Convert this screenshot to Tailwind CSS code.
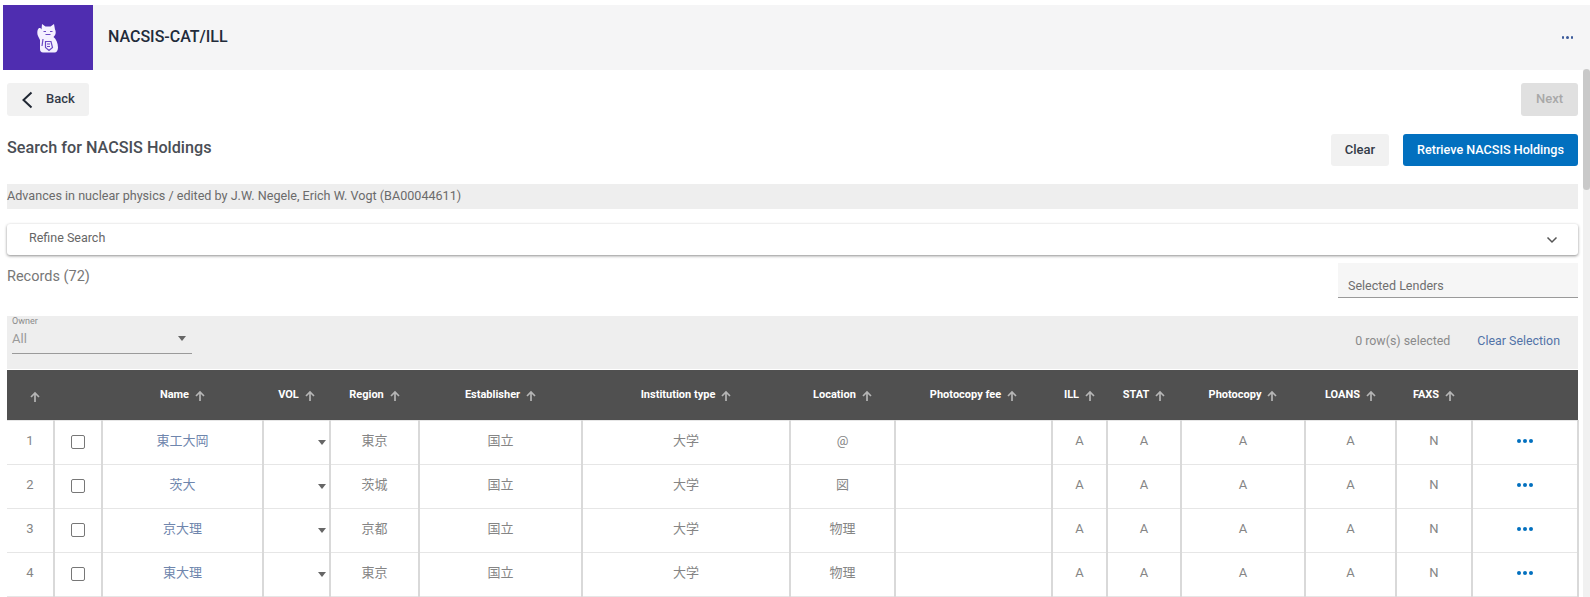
<!DOCTYPE html>
<html lang="en">
  <head>
    <meta charset="UTF-8" />
    <title>NACSIS-CAT/ILL</title>
    <script src="https://cdn.jsdelivr.net/npm/@tailwindcss/browser@4"></script>
  </head>
  <body class="h-[597px] overflow-hidden bg-white font-['Roboto','Noto_Sans_CJK_JP',sans-serif] text-[#666] antialiased">
    <!-- Top bar -->
    <header class="mt-[5px] ml-[3px] flex h-[65px] items-center bg-[#f5f5f6]">
      <div class="flex h-full w-[90px] items-center justify-center bg-[#4f2db0]">
        <svg width="22" height="30" viewBox="0 0 22 30" fill="#f4f0ff">
          <path d="M5 1l3.500 2.500h5L17 1l1 5.500c1.500 3 .5 6-1.500 7.500 2.500 2 4.500 6 4.500 10.500 0 3-1.500 5-3.500 5H6c-2 0-3-1.500-3-3.500v-9L1 13c-1-2-1-6 .5-7.500 1.500-1 2.500 0 3 1z" />
          <path d="M6.500 8.500h2.500M13 8.500h2.500M8.500 11.500h5M6 16l-1 7M8.500 18.500h5.500l1.500 6-3.500 3-3.500-3zM10 21h3M10 23.500h3" stroke="#6a48c4" stroke-width="1.200" fill="none" />
        </svg>
      </div>
      <h1 class="ml-[15px] pb-[2px] text-[16px] leading-none font-medium text-[#222b3a]">NACSIS-CAT/ILL</h1>
      <div class="mr-[17px] ml-auto flex gap-[2px]">
        <span class="size-[2.500px] rounded-full bg-[#3b5a9a]"></span>
        <span class="size-[2.500px] rounded-full bg-[#3b5a9a]"></span>
        <span class="size-[2.500px] rounded-full bg-[#3b5a9a]"></span>
      </div>
    </header>

    <!-- Scrollbar -->
    <div class="absolute top-[69px] right-0 bottom-0 w-[7px] bg-[#f1f1f1]">
      <div class="h-[121px] w-full rounded-sm bg-[#c9c9c9]"></div>
    </div>

    <main class="mr-[12px] ml-[7px]">
      <div class="mt-[13px] flex justify-between">
        <button class="flex h-[33px] w-[82px] items-center rounded-[3px] bg-[#f1f1f1] pl-[14px] text-[13px] font-medium text-[#333b48]">
          <svg width="12" height="18" viewBox="0 0 12 18" fill="none" stroke="#1f2733" stroke-width="2"><path d="M10.500 1.500L2.500 9l8 7.500" /></svg>
          <span class="ml-[13px] pb-[2px]">Back</span>
        </button>
        <button class="h-[33px] w-[57px] rounded-[3px] bg-[#e0e0e0] pb-[2px] text-[13px] font-medium text-[#a8a8a8]">Next</button>
      </div>

      <div class="mt-[18px] flex items-center justify-between">
        <h2 class="pb-[4px] text-[16.200px] font-medium text-[#4a4e55]">Search for NACSIS Holdings</h2>
        <div class="flex gap-[14px]">
          <button class="h-[32px] w-[58px] rounded-[3px] bg-[#f1f1f1] text-[13px] font-medium text-[#333b48]">Clear</button>
          <button class="h-[32px] w-[175px] rounded-[3px] bg-[#0270bf] text-[12.600px] font-medium text-white">Retrieve NACSIS Holdings</button>
        </div>
      </div>

      <div class="mt-[18px] flex h-[25px] items-center bg-[#eeeeee] text-[12.600px] text-[#6b6b6b]">Advances in nuclear physics / edited by J.W. Negele, Erich W. Vogt (BA00044611)</div>

      <div class="mt-[15px] flex h-[31px] items-center justify-between rounded-[3px] bg-white pr-[20px] pl-[22px] text-[12.500px] text-[#666] shadow-[0_1px_3px_rgba(0,0,0,0.45)]">
        <span class="-mt-[2px]">Refine Search</span>
        <svg width="12" height="8" viewBox="0 0 12 8" fill="none" stroke="#555" stroke-width="1.500"><path d="M1.500 1.500L6 6l4.500-4.500" /></svg>
      </div>

      <div class="mt-[8px] flex h-[53px] items-start justify-between">
        <span class="mt-[1px] text-[14.500px] leading-[26px] text-[#777]">Records (72)</span>
        <div class="flex h-[35px] w-[240px] items-end border-b border-[#9a9a9a] bg-[#f6f6f6] pb-[1px] pl-[10px] text-[12.500px] text-[#6f6f6f]">Selected Lenders</div>
      </div>

      <div class="flex h-[53px] items-start justify-between bg-[#eeeeee] pr-[18px] pl-[5px]">
        <div class="w-[180px]">
          <div class="text-[9px] leading-[11px] text-[#8a8a8a]">Owner</div>
          <div class="mt-[3px] flex h-[24px] items-center justify-between border-b border-[#9a9a9a] pr-[3px] pb-[6px] text-[13px] text-[#9a9a9a]">
            <span>All</span>
            <span class="mr-[3px] h-0 w-0 border-x-[4.500px] border-t-[5px] border-x-transparent border-t-[#666]"></span>
          </div>
        </div>
        <div class="mt-[17px] flex text-[12.400px] leading-[15px]">
          <span class="text-[#8a8a8a]">0 row(s) selected</span>
          <a class="ml-[27px] text-[#5273a8]">Clear Selection</a>
        </div>
      </div>

      <!-- Holdings table -->
      <table class="mt-[1px] w-[1571px] table-fixed border-collapse text-center text-[13px] text-[#858585]">
        <colgroup>
          <col class="w-[47px]" /><col class="w-[48px]" /><col class="w-[161px]" /><col class="w-[67px]" /><col class="w-[89px]" /><col class="w-[163px]" /><col class="w-[208px]" /><col class="w-[105px]" /><col class="w-[157px]" /><col class="w-[55px]" /><col class="w-[74px]" /><col class="w-[124px]" /><col class="w-[91px]" /><col class="w-[76px]" /><col class="w-[106px]" />
        </colgroup>
        <thead class="bg-[#505050] text-[11px] font-bold text-white">
          <tr class="h-[50px]">
            <th class="pt-[3px] pl-[9px]"><svg class="inline" width="10" height="11" viewBox="0 0 10 11" fill="none" stroke="#b5b5b5" stroke-width="1.700"><path d="M5 11V2M1 6l4-4 4 4" /></svg></th>
            <th></th>
            <th>Name<svg class="ml-[6px] inline align-[-3px]" width="10" height="11" viewBox="0 0 10 11" fill="none" stroke="#b5b5b5" stroke-width="1.700"><path d="M5 11V2M1 6l4-4 4 4" /></svg></th>
            <th>VOL<svg class="ml-[6px] inline align-[-3px]" width="10" height="11" viewBox="0 0 10 11" fill="none" stroke="#b5b5b5" stroke-width="1.700"><path d="M5 11V2M1 6l4-4 4 4" /></svg></th>
            <th>Region<svg class="ml-[6px] inline align-[-3px]" width="10" height="11" viewBox="0 0 10 11" fill="none" stroke="#b5b5b5" stroke-width="1.700"><path d="M5 11V2M1 6l4-4 4 4" /></svg></th>
            <th>Establisher<svg class="ml-[6px] inline align-[-3px]" width="10" height="11" viewBox="0 0 10 11" fill="none" stroke="#b5b5b5" stroke-width="1.700"><path d="M5 11V2M1 6l4-4 4 4" /></svg></th>
            <th>Institution type<svg class="ml-[6px] inline align-[-3px]" width="10" height="11" viewBox="0 0 10 11" fill="none" stroke="#b5b5b5" stroke-width="1.700"><path d="M5 11V2M1 6l4-4 4 4" /></svg></th>
            <th>Location<svg class="ml-[6px] inline align-[-3px]" width="10" height="11" viewBox="0 0 10 11" fill="none" stroke="#b5b5b5" stroke-width="1.700"><path d="M5 11V2M1 6l4-4 4 4" /></svg></th>
            <th>Photocopy fee<svg class="ml-[6px] inline align-[-3px]" width="10" height="11" viewBox="0 0 10 11" fill="none" stroke="#b5b5b5" stroke-width="1.700"><path d="M5 11V2M1 6l4-4 4 4" /></svg></th>
            <th>ILL<svg class="ml-[6px] inline align-[-3px]" width="10" height="11" viewBox="0 0 10 11" fill="none" stroke="#b5b5b5" stroke-width="1.700"><path d="M5 11V2M1 6l4-4 4 4" /></svg></th>
            <th>STAT<svg class="ml-[6px] inline align-[-3px]" width="10" height="11" viewBox="0 0 10 11" fill="none" stroke="#b5b5b5" stroke-width="1.700"><path d="M5 11V2M1 6l4-4 4 4" /></svg></th>
            <th>Photocopy<svg class="ml-[6px] inline align-[-3px]" width="10" height="11" viewBox="0 0 10 11" fill="none" stroke="#b5b5b5" stroke-width="1.700"><path d="M5 11V2M1 6l4-4 4 4" /></svg></th>
            <th>LOANS<svg class="ml-[6px] inline align-[-3px]" width="10" height="11" viewBox="0 0 10 11" fill="none" stroke="#b5b5b5" stroke-width="1.700"><path d="M5 11V2M1 6l4-4 4 4" /></svg></th>
            <th>FAXS<svg class="ml-[6px] inline align-[-3px]" width="10" height="11" viewBox="0 0 10 11" fill="none" stroke="#b5b5b5" stroke-width="1.700"><path d="M5 11V2M1 6l4-4 4 4" /></svg></th>
            <th></th>
          </tr>
        </thead>
        <tbody class="[&_td]:border-y [&_td]:border-y-[#e6e6e6] [&_td]:border-r-2 [&_td]:border-r-[#d9d9d9] [&_td]:pb-[2px] [&_tr]:h-[44px]">
          <tr>
            <td>1</td>
            <td><span class="mx-auto block size-[14px] translate-y-px rounded-[2px] border border-[#777]"></span></td>
            <td class="text-[#6f86ad]">東工大岡</td>
            <td><span class="float-right mt-[2px] mr-[3px] h-0 w-0 border-x-[4.500px] border-t-[5px] border-x-transparent border-t-[#666]"></span></td>
            <td>東京</td><td>国立</td><td>大学</td><td>@</td><td></td><td>A</td><td>A</td><td>A</td><td>A</td><td>N</td>
            <td><span class="flex justify-center gap-[2px]"><i class="size-[4px] rounded-full bg-[#0270bf]"></i><i class="size-[4px] rounded-full bg-[#0270bf]"></i><i class="size-[4px] rounded-full bg-[#0270bf]"></i></span></td>
          </tr>
          <tr>
            <td>2</td>
            <td><span class="mx-auto block size-[14px] translate-y-px rounded-[2px] border border-[#777]"></span></td>
            <td class="text-[#6f86ad]">茨大</td>
            <td><span class="float-right mt-[2px] mr-[3px] h-0 w-0 border-x-[4.500px] border-t-[5px] border-x-transparent border-t-[#666]"></span></td>
            <td>茨城</td><td>国立</td><td>大学</td><td>図</td><td></td><td>A</td><td>A</td><td>A</td><td>A</td><td>N</td>
            <td><span class="flex justify-center gap-[2px]"><i class="size-[4px] rounded-full bg-[#0270bf]"></i><i class="size-[4px] rounded-full bg-[#0270bf]"></i><i class="size-[4px] rounded-full bg-[#0270bf]"></i></span></td>
          </tr>
          <tr>
            <td>3</td>
            <td><span class="mx-auto block size-[14px] translate-y-px rounded-[2px] border border-[#777]"></span></td>
            <td class="text-[#6f86ad]">京大理</td>
            <td><span class="float-right mt-[2px] mr-[3px] h-0 w-0 border-x-[4.500px] border-t-[5px] border-x-transparent border-t-[#666]"></span></td>
            <td>京都</td><td>国立</td><td>大学</td><td>物理</td><td></td><td>A</td><td>A</td><td>A</td><td>A</td><td>N</td>
            <td><span class="flex justify-center gap-[2px]"><i class="size-[4px] rounded-full bg-[#0270bf]"></i><i class="size-[4px] rounded-full bg-[#0270bf]"></i><i class="size-[4px] rounded-full bg-[#0270bf]"></i></span></td>
          </tr>
          <tr>
            <td>4</td>
            <td><span class="mx-auto block size-[14px] translate-y-px rounded-[2px] border border-[#777]"></span></td>
            <td class="text-[#6f86ad]">東大理</td>
            <td><span class="float-right mt-[2px] mr-[3px] h-0 w-0 border-x-[4.500px] border-t-[5px] border-x-transparent border-t-[#666]"></span></td>
            <td>東京</td><td>国立</td><td>大学</td><td>物理</td><td></td><td>A</td><td>A</td><td>A</td><td>A</td><td>N</td>
            <td><span class="flex justify-center gap-[2px]"><i class="size-[4px] rounded-full bg-[#0270bf]"></i><i class="size-[4px] rounded-full bg-[#0270bf]"></i><i class="size-[4px] rounded-full bg-[#0270bf]"></i></span></td>
          </tr>
        </tbody>
      </table>
    </main>
  </body>
</html>
